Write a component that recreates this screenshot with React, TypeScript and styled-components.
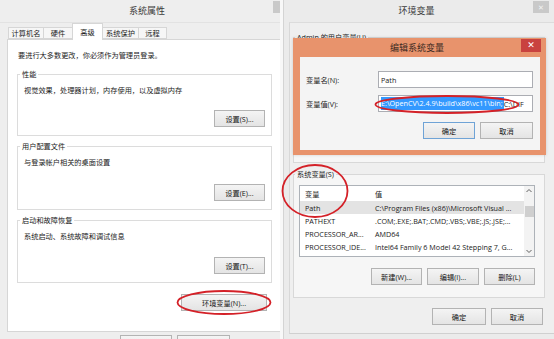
import React from "react";
import styled, { createGlobalStyle } from "styled-components";

const FONT = `"Open Sans", "Noto Sans CJK SC", sans-serif`;

const Global = createGlobalStyle`
  html, body { margin: 0; padding: 0; background: #efefef; }
  body { font-family: ${FONT}; }
  * { box-sizing: border-box; }
`;

const Page = styled.div`
  position: relative;
  width: 554px;
  height: 339px;
  overflow: hidden;
  display: flex;
  background: #f7f7f7;
  font-family: ${FONT};
  font-size: 7.2px;
  color: #1b1b1b;
`;

/* ---------- shared ---------- */
const TitleBar = styled.div<{ $padLeft?: number; $padRight?: number }>`
  height: 22px;
  flex: none;
  display: grid;
  grid-template-columns: 1fr auto 1fr;
  align-items: start;
  padding-left: ${(p) => p.$padLeft ?? 0}px;
  padding-right: ${(p) => p.$padRight ?? 0}px;
`;

const TitleText = styled.div`
  grid-column: 2;
  font-size: 9px;
  line-height: 22px;
  color: #3a3a3a;
  white-space: nowrap;
`;

const CloseStub = styled.div<{ $w: number }>`
  grid-column: 3;
  justify-self: end;
  width: ${(p) => p.$w}px;
  height: 12px;
  margin-top: 1px;
  background: #c9c9c9;
  display: flex;
  align-items: center;
  justify-content: center;
  color: #f4f4f4;
  font-size: 7px;
  line-height: 1;
`;

const Btn = styled.div<{ $w: number; $primary?: boolean }>`
  width: ${(p) => p.$w}px;
  height: 17px;
  flex: none;
  border: 1px solid ${(p) => (p.$primary ? "#6fa3d6" : "#b3b3b3")};
  background: linear-gradient(#f4f4f4, #e4e4e4);
  display: flex;
  align-items: center;
  justify-content: center;
  font-size: 7.2px;
  color: #141414;
  white-space: nowrap;
`;

const ButtonRow = styled.div<{ $mt: number; $gap?: number; $pr?: number }>`
  display: flex;
  justify-content: flex-end;
  gap: ${(p) => p.$gap ?? 5}px;
  margin-top: ${(p) => p.$mt}px;
  padding-right: ${(p) => p.$pr ?? 0}px;
`;

/* ---------- left window ---------- */
const LeftWindow = styled.div`
  width: 280px;
  flex: none;
  display: flex;
  flex-direction: column;
  background: #eeeeee;
`;

const LeftClient = styled.div`
  flex: 1;
  border-top: 1px solid #e2e2e2;
  padding-left: 7px;
  display: flex;
  flex-direction: column;
`;

const TabRow = styled.div`
  height: 16px;
  display: flex;
  align-items: flex-end;
  padding-left: 1px;
  position: relative;
  z-index: 2;
`;

const Tab = styled.div<{ $w: number; $active?: boolean }>`
  width: ${(p) => p.$w}px;
  height: ${(p) => (p.$active ? 17 : 12)}px;
  margin-bottom: ${(p) => (p.$active ? -1 : 0)}px;
  margin-left: -1px;
  border: 1px solid #d6d6d6;
  border-bottom: ${(p) => (p.$active ? "none" : "1px solid #d6d6d6")};
  background: ${(p) => (p.$active ? "#ffffff" : "#f6f6f6")};
  display: flex;
  align-items: center;
  justify-content: center;
  color: #222;
  white-space: nowrap;
  &:first-child { margin-left: 0; }
`;

const TabPanel = styled.div`
  height: 293px;
  flex: none;
  background: #ffffff;
  border: 1px solid #d6d6d6;
  border-right: none;
  padding: 10px 8px 0 9px;
  display: flex;
  flex-direction: column;
`;

const Intro = styled.div`
  line-height: 10px;
  margin-left: 1px;
  white-space: nowrap;
`;

const Group = styled.fieldset<{ $mt: number }>`
  margin: ${(p) => p.$mt}px 0 0 0;
  padding: 0 6px 8px 6px;
  border: 1px solid #dcdcdc;
  min-width: 0;
  display: flex;
  flex-direction: column;
`;

const Legend = styled.legend<{ $ml: number }>`
  margin-left: ${(p) => p.$ml}px;
  padding: 0 2px;
  line-height: 10px;
  color: #222;
  white-space: nowrap;
`;

const Desc = styled.div`
  line-height: 10px;
  margin-top: 6px;
  white-space: nowrap;
`;

const Footer = styled.div`
  display: flex;
  gap: 5px;
  padding-left: 113px;
  margin-top: 3px;
`;

const Separator = styled.div`
  width: 3px;
  flex: none;
  background: #f8f8f8;
`;

/* ---------- right window ---------- */
const RightWindow = styled.div`
  position: relative;
  width: 271px;
  flex: none;
  display: flex;
  flex-direction: column;
  background: #ebebeb;
  border-left: 1px solid #d4d4d4;
`;

const RightClient = styled.div`
  flex: none;
  height: 312px;
  margin-left: 5px;
  background: #efefef;
  border-top: 1px solid #dcdcdc;
  border-left: 1px solid #d8d8d8;
  border-bottom: 1px solid #d0d0d0;
  padding-left: 3px;
  display: flex;
  flex-direction: column;
`;

const Box = styled.fieldset<{ $mt: number; $h: number }>`
  width: 252px;
  height: ${(p) => p.$h}px;
  margin: ${(p) => p.$mt}px 0 0 0;
  padding: 0 9px 11px 5px;
  border: 1px solid #d8d8d8;
  background: #f6f6f6;
  min-width: 0;
  display: flex;
  flex-direction: column;
`;

const ListBox = styled.div`
  margin-top: 6px;
  height: 72px;
  border: 1px solid #adb2b8;
  background: #ffffff;
  display: flex;
  overflow: hidden;
`;

const ListBody = styled.div`
  flex: 1;
  display: flex;
  flex-direction: column;
  overflow: hidden;
`;

const ListRow = styled.div<{ $h: number; $sel?: boolean }>`
  height: ${(p) => p.$h}px;
  flex: none;
  display: flex;
  align-items: center;
  background: ${(p) => (p.$sel ? "#e3e3e3" : "transparent")};
  white-space: nowrap;
`;

const NameCell = styled.div`
  width: 70px;
  flex: none;
  padding-left: 5px;
  overflow: hidden;
`;

const ValueCell = styled.div`
  flex: 1;
  padding-left: 5px;
  overflow: hidden;
`;

const ScrollBar = styled.div`
  width: 10px;
  flex: none;
  background: #f3f3f3;
  display: flex;
  flex-direction: column;
  align-items: center;
`;

const Thumb = styled.div`
  width: 9px;
  height: 11px;
  margin-top: 11px;
  background: #cfcfcf;
`;

const Spacer = styled.div`
  flex: 1;
`;

const BottomRow = styled.div`
  width: 252px;
  display: flex;
  justify-content: flex-end;
  gap: 5px;
  padding-right: 2px;
  margin-top: 10px;
`;

/* ---------- edit dialog ---------- */
const Dialog = styled.div`
  position: absolute;
  left: 9px;
  top: 38px;
  width: 253px;
  height: 117px;
  background: #e8936c;
  display: flex;
  flex-direction: column;
  box-shadow: 0 0 3px rgba(0, 0, 0, 0.15);
`;

const DialogTitle = styled.div`
  height: 19px;
  flex: none;
  display: grid;
  grid-template-columns: 1fr auto 1fr;
  align-items: start;
  padding-right: 5px;
`;

const DialogTitleText = styled.div`
  grid-column: 2;
  font-size: 9px;
  line-height: 20px;
  color: #3b2a22;
  white-space: nowrap;
`;

const RedClose = styled.div`
  grid-column: 3;
  justify-self: end;
  width: 20px;
  height: 13px;
  margin-top: 1px;
  background: #c9423f;
  color: #fff;
  font-size: 9px;
  line-height: 13px;
  text-align: center;
  font-family: "DejaVu Sans", sans-serif;
`;

const DialogClient = styled.div`
  flex: 1;
  margin: 0 6px 5px 7px;
  background: #f4f4f4;
  padding: 14px 7px 0 6px;
  display: flex;
  flex-direction: column;
`;

const FieldRow = styled.div<{ $mt?: number }>`
  display: flex;
  align-items: center;
  margin-top: ${(p) => p.$mt ?? 0}px;
`;

const FieldLabel = styled.div`
  width: 72px;
  flex: none;
  white-space: nowrap;
`;

const TextBox = styled.div`
  flex: 1;
  height: 17px;
  border: 1px solid #abadb3;
  background: #ffffff;
  padding-left: 2px;
  display: flex;
  align-items: center;
  white-space: nowrap;
  overflow: hidden;
`;

const Selected = styled.span`
  background: #3399ff;
  color: #ffffff;
  line-height: 13px;
  padding-right: 1px;
`;

const Overlay = styled.svg`
  position: absolute;
  left: 0;
  top: 0;
  pointer-events: none;
`;

const rows: [string, string][] = [
  ["Path", "C:\\Program Files (x86)\\Microsoft Visual ..."],
  ["PATHEXT", ".COM;.EXE;.BAT;.CMD;.VBS;.VBE;.JS;.JSE;..."],
  ["PROCESSOR_AR...", "AMD64"],
  ["PROCESSOR_IDE...", "Intel64 Family 6 Model 42 Stepping 7, G..."],
  ["PROCESSOR_LEV...", "6"],
];

export default function App() {
  return (
    <>
      <Global />
      <Page>
        <LeftWindow>
          <TitleBar $padLeft={14}>
            <TitleText>系统属性</TitleText>
            <CloseStub $w={7} />
          </TitleBar>
          <LeftClient>
            <TabRow>
              <Tab $w={36}>计算机名</Tab>
              <Tab $w={30}>硬件</Tab>
              <Tab $w={31} $active>高级</Tab>
              <Tab $w={37}>系统保护</Tab>
              <Tab $w={29}>远程</Tab>
            </TabRow>
            <TabPanel>
              <Intro>要进行大多数更改，你必须作为管理员登录。</Intro>
              <Group $mt={9}>
                <Legend $ml={-4}>性能</Legend>
                <Desc>视觉效果，处理器计划，内存使用，以及虚拟内存</Desc>
                <ButtonRow $mt={15}>
                  <Btn $w={51}>设置(S)...</Btn>
                </ButtonRow>
              </Group>
              <Group $mt={5}>
                <Legend $ml={-4}>用户配置文件</Legend>
                <Desc>与登录帐户相关的桌面设置</Desc>
                <ButtonRow $mt={17}>
                  <Btn $w={51}>设置(E)...</Btn>
                </ButtonRow>
              </Group>
              <Group $mt={5}>
                <Legend $ml={-4}>启动和故障恢复</Legend>
                <Desc>系统启动、系统故障和调试信息</Desc>
                <ButtonRow $mt={16}>
                  <Btn $w={51}>设置(T)...</Btn>
                </ButtonRow>
              </Group>
              <ButtonRow $mt={11} $pr={5}>
                <Btn $w={86}>环境变量(N)...</Btn>
              </ButtonRow>
            </TabPanel>
            <Footer>
              <Btn $w={52}>确定</Btn>
              <Btn $w={53}>取消</Btn>
            </Footer>
          </LeftClient>
        </LeftWindow>

        <Separator />

        <RightWindow>
          <TitleBar $padRight={5}>
            <TitleText>环境变量</TitleText>
            <CloseStub $w={16}>✕</CloseStub>
          </TitleBar>
          <RightClient>
            <Box $mt={9} $h={131}>
              <Legend $ml={-4}>Admin 的用户变量(U)</Legend>
            </Box>
            <Box $mt={6} $h={129}>
              <Legend $ml={-4}>系统变量(S)</Legend>
              <ListBox>
                <ListBody>
                  <ListRow $h={15}>
                    <NameCell>变量</NameCell>
                    <ValueCell>值</ValueCell>
                  </ListRow>
                  {rows.map(([n, v], i) => (
                    <ListRow key={n} $h={13} $sel={i === 0}>
                      <NameCell>{n}</NameCell>
                      <ValueCell>{v}</ValueCell>
                    </ListRow>
                  ))}
                </ListBody>
                <ScrollBar>
                  <svg width="10" height="9" viewBox="0 0 10 9">
                    <path d="M2.5 6 L5 3.5 L7.5 6" fill="none" stroke="#606060" strokeWidth="1" />
                  </svg>
                  <Thumb />
                  <Spacer />
                  <svg width="10" height="9" viewBox="0 0 10 9">
                    <path d="M2.5 3 L5 5.5 L7.5 3" fill="none" stroke="#606060" strokeWidth="1" />
                  </svg>
                </ScrollBar>
              </ListBox>
              <ButtonRow $mt={11} $gap={5}>
                <Btn $w={51}>新建(W)...</Btn>
                <Btn $w={52}>编辑(I)...</Btn>
                <Btn $w={51}>删除(L)</Btn>
              </ButtonRow>
            </Box>
            <BottomRow>
              <Btn $w={54}>确定</Btn>
              <Btn $w={52}>取消</Btn>
            </BottomRow>
          </RightClient>

          <Dialog>
            <DialogTitle>
              <DialogTitleText>编辑系统变量</DialogTitleText>
              <RedClose>✕</RedClose>
            </DialogTitle>
            <DialogClient>
              <FieldRow>
                <FieldLabel>变量名(N):</FieldLabel>
                <TextBox>Path</TextBox>
              </FieldRow>
              <FieldRow $mt={7}>
                <FieldLabel>变量值(V):</FieldLabel>
                <TextBox>
                  <Selected>E:\OpenCV\2.4.9\build\x86\vc11\bin;</Selected>
                  C:\DIF
                </TextBox>
              </FieldRow>
              <ButtonRow $mt={10} $gap={5}>
                <Btn $w={52} $primary>确定</Btn>
                <Btn $w={53}>取消</Btn>
              </ButtonRow>
            </DialogClient>
          </Dialog>
        </RightWindow>

        <Overlay width="554" height="339" viewBox="0 0 554 339">
          <g fill="none" stroke="#d42128" strokeWidth="1.8">
            <ellipse cx="224" cy="302.5" rx="46.5" ry="11.5" />
            <ellipse cx="447" cy="104.5" rx="71.5" ry="8.5" />
            <ellipse cx="315" cy="191" rx="32.5" ry="26" />
          </g>
        </Overlay>
      </Page>
    </>
  );
}
